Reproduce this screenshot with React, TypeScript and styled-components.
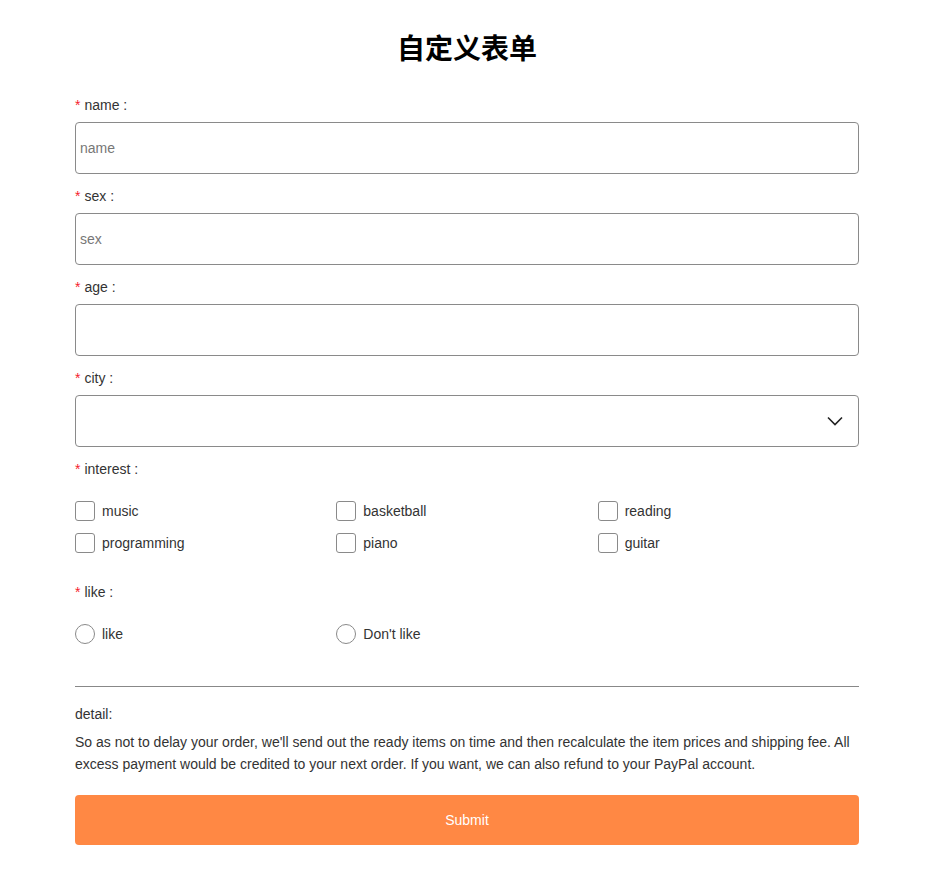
import React from "react";
import styled, { createGlobalStyle } from "styled-components";

const Global = createGlobalStyle`
  html, body { margin: 0; padding: 0; background: #fff; }
  body { font-family: "Liberation Sans", Arial, "Noto Sans CJK SC", sans-serif; color: #333; }
  * { box-sizing: border-box; }
`;

const Page = styled.div`
  width: 784px;
  margin: 0 auto;
  padding: 27px 0 30px;
  display: flex;
  flex-direction: column;
`;

const Title = styled.h1`
  margin: 0 0 28px;
  text-align: center;
  font-family: "Noto Sans CJK SC", "Liberation Sans", sans-serif;
  font-size: 28px;
  font-weight: 700;
  line-height: 40px;
  color: #000;
`;

const Field = styled.div<{ $gap?: number; $after?: number }>`
  display: flex;
  flex-direction: column;
  gap: ${(p) => p.$gap ?? 7}px;
  margin-bottom: ${(p) => p.$after ?? 12}px;
`;

const Label = styled.label`
  display: block;
  height: 20px;
  font-size: 14px;
  line-height: 20px;
  color: #333;
`;

const Star = styled.span`
  color: #f5222d;
  font-size: 14px;
  line-height: 20px;
  margin-right: 4px;
`;

const Input = styled.input`
  width: 100%;
  height: 52px;
  border: 1px solid #8a8a8a;
  border-radius: 4px;
  padding: 0 4px;
  font-family: "Liberation Sans", Arial, sans-serif;
  font-size: 14px;
  color: #333;
  outline: none;
  &::placeholder { color: #777; }
`;

const SelectBox = styled.div`
  width: 100%;
  height: 52px;
  border: 1px solid #8a8a8a;
  border-radius: 4px;
  display: flex;
  align-items: center;
  justify-content: flex-end;
  padding-right: 15px;
`;

const OptionGrid = styled.div<{ $rowGap?: number }>`
  display: grid;
  grid-template-columns: repeat(3, 1fr);
  row-gap: ${(p) => p.$rowGap ?? 12}px;
`;

const Option = styled.label`
  display: flex;
  align-items: center;
  gap: 7px;
  height: 20px;
  font-size: 14px;
  line-height: 20px;
  color: #333;
`;

const Box = styled.span<{ $round?: boolean }>`
  width: 20px;
  height: 20px;
  border: 1px solid #8a8a8a;
  border-radius: ${(p) => (p.$round ? "50%" : "3px")};
  background: #fff;
  flex: none;
`;

const Divider = styled.hr`
  margin: 0 0 17px;
  border: none;
  border-top: 1px solid #888;
  height: 0;
`;

const DetailTitle = styled.div`
  font-size: 14px;
  line-height: 20px;
  color: #333;
  margin-bottom: 7px;
`;

const Detail = styled.p`
  margin: 0 0 20px;
  font-size: 14px;
  line-height: 22px;
  color: #333;
`;

const Submit = styled.button`
  width: 100%;
  height: 50px;
  border: none;
  border-radius: 4px;
  background: #ff8844;
  color: #fff;
  font-family: "Liberation Sans", Arial, sans-serif;
  font-size: 14px;
`;

const Chevron = () => (
  <svg width="16" height="10" viewBox="0 0 16 10" fill="none">
    <path d="M1 1.5 L8 8.5 L15 1.5" stroke="#222" strokeWidth="1.6" />
  </svg>
);

const interests = ["music", "basketball", "reading", "programming", "piano", "guitar"];

export default function App() {
  return (
    <>
      <Global />
      <Page>
        <Title>自定义表单</Title>
        <Field>
          <Label><Star>*</Star>name :</Label>
          <Input placeholder="name" />
        </Field>
        <Field>
          <Label><Star>*</Star>sex :</Label>
          <Input placeholder="sex" />
        </Field>
        <Field>
          <Label><Star>*</Star>age :</Label>
          <Input />
        </Field>
        <Field>
          <Label><Star>*</Star>city :</Label>
          <SelectBox><Chevron /></SelectBox>
        </Field>
        <Field $gap={22} $after={29}>
          <Label><Star>*</Star>interest :</Label>
          <OptionGrid>
            {interests.map((i) => (
              <Option key={i}><Box />{i}</Option>
            ))}
          </OptionGrid>
        </Field>
        <Field $gap={22} $after={42}>
          <Label><Star>*</Star>like :</Label>
          <OptionGrid>
            <Option><Box $round />like</Option>
            <Option><Box $round />Don't like</Option>
          </OptionGrid>
        </Field>
        <Divider />
        <DetailTitle>detail:</DetailTitle>
        <Detail>
          So as not to delay your order, we'll send out the ready items on time and then recalculate the item prices and shipping fee. All excess payment would be credited to your next order. If you want, we can also refund to your PayPal account.
        </Detail>
        <Submit>Submit</Submit>
      </Page>
    </>
  );
}
